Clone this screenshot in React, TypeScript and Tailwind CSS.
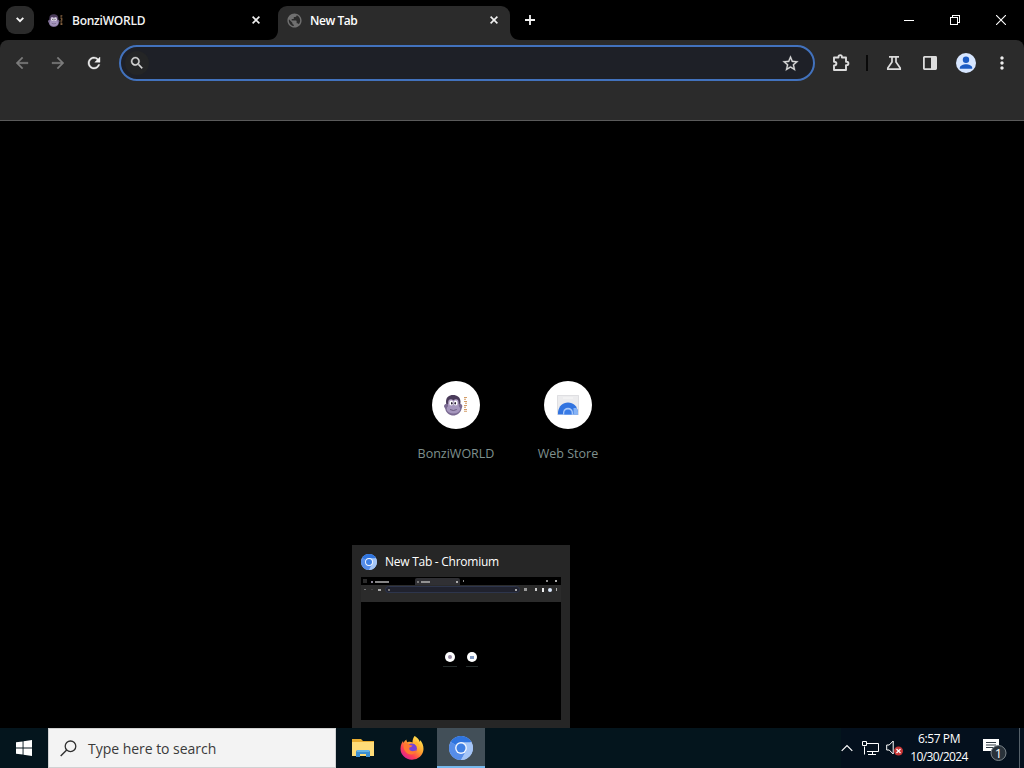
import React from "react";
import { MdPublic, MdMoreVert } from "react-icons/md";

function Cross({ className = "" }: { className?: string }) {
  return (
    <svg className={className} width="8" height="8" viewBox="0 0 8 8">
      <path d="M.6.6 7.4 7.4M7.4.6.6 7.4" stroke="#f0f0f0" strokeWidth="1.6" />
    </svg>
  );
}

function Glyph({ d, size, color, weight = 0.5 }: { d: string; size: number; color: string; weight?: number }) {
  return (
    <svg width={size} height={size} viewBox="0 0 24 24">
      <path d={d} fill={color} stroke={color} strokeWidth={weight} />
    </svg>
  );
}

const backPath = "M20 11H7.830l5.590-5.590L12 4l-8 8 8 8 1.410-1.410L7.830 13H20v-2z";
const forwardPath = "M12 4l-1.410 1.410L16.170 11H4v2h12.170l-5.580 5.590L12 20l8-8z";
const refreshPath =
  "M17.650 6.350A7.958 7.958 0 0 0 12 4c-4.420 0-7.990 3.580-7.990 8s3.570 8 7.990 8c3.730 0 6.840-2.550 7.730-6h-2.080A5.990 5.990 0 0 1 12 18c-3.310 0-6-2.690-6-6s2.690-6 6-6c1.660 0 3.140.690 4.220 1.780L13 11h7V4l-2.350 2.350z";
const searchPath =
  "M15.500 14h-.790l-.280-.270A6.471 6.471 0 0 0 16 9.500 6.500 6.500 0 1 0 9.500 16c1.610 0 3.090-.590 4.230-1.570l.270.280v.790l5 4.990L20.490 19l-4.990-5zm-6 0C7.010 14 5 11.990 5 9.500S7.010 5 9.500 5 14 7.010 14 9.500 11.990 14 9.500 14z";
const starPath =
  "M22 9.240l-7.190-.620L12 2 9.190 8.630 2 9.240l5.460 4.730L5.820 21 12 17.270 18.180 21l-1.630-7.030L22 9.240zM12 15.400l-3.760 2.270 1-4.280-3.320-2.880 4.380-.380L12 6.100l1.710 4.040 4.380.380-3.320 2.880 1 4.280L12 15.400z";

function Bonzi({ size }: { size: number }) {
  return (
    <svg width={size} height={size} viewBox="0 0 24 24">
      <path d="M2 9C2 4 5 2 9 2s7.500 2 7.500 7l-.5 5H2.500z" fill="#4a3b5a" />
      <path d="M0 13.500C0 11.500 2 10.500 3.500 11h11.500c1.500-.5 3.500.5 3.300 2.500L17.500 16C16.500 20 13 22.500 9.300 22.500S2 20 1.300 16z" fill="#7a6a92" />
      <path d="M4.200 9.500C4 6 7.500 5.500 9.400 7.500c2-2 5.400-1.500 5.200 2V14H4.200z" fill="#b6a5c9" />
      <ellipse cx="9.400" cy="16" rx="6.800" ry="4.600" fill="#a596bd" />
      <ellipse cx="7.300" cy="10" rx="1.900" ry="2.500" fill="#fff" />
      <ellipse cx="11.600" cy="10" rx="1.900" ry="2.500" fill="#fff" />
      <ellipse cx="7.800" cy="10.200" rx=".8" ry="1.300" fill="#20162c" />
      <ellipse cx="11.200" cy="10.200" rx=".8" ry="1.300" fill="#20162c" />
      <path d="M6 16.500q3.400 2 6.800 0" stroke="#6b5b80" fill="none" />
      <path d="M20 4.500h3M20 6.300h2M20 8.500h3M21 10.300h2M20 12.500h3M20 14.300h2M20 16.500h3M20 18.300h3" stroke="#d39c66" strokeWidth="1.100" />
    </svg>
  );
}

function Chromium({ size }: { size: number }) {
  return (
    <svg width={size} height={size} viewBox="0 0 24 24">
      <circle cx="12" cy="12" r="12" fill="#a4c5f7" />
      <path d="M12 12 1.600 6A12 12 0 0 1 22.400 6z" fill="#2f74de" />
      <path d="M12 12 1.600 6A12 12 0 0 0 12 24l5.200-9z" fill="#568de8" />
      <path d="M12 6.200h10.500A12 12 0 0 1 12 24l5-9z" fill="#a4c5f7" />
      <circle cx="12" cy="12" r="5.900" fill="#f3f7ff" />
      <circle cx="12" cy="12" r="4.500" fill="#3f80e4" />
    </svg>
  );
}

function WebStore() {
  return (
    <svg width="22" height="20" viewBox="0 0 22 20">
      <path d="M0 0h22v20H0z" fill="#ececee" />
      <path d="M.5 20V.5h21V20" fill="none" stroke="#dfdfe2" />
      <path d="M6 2.500h10v1H6z" fill="#f8f8f8" />
      <path d="M1 19.500V17C2 11 5.500 7.500 11 7.500S20 11 21 17v2.500z" fill="#3274e0" />
      <path d="M16.500 13h3c1 1.500 1.300 2.500 1.500 4v2.500h-4.500z" fill="#86b3f5" />
      <path d="M6 19.500v-1.700a5 5 0 0 1 10 0v1.700z" fill="#a9c9fa" />
      <path d="M7.300 19.500v-1.300a3.700 3.700 0 0 1 7.400 0v1.300z" fill="#397ce7" />
    </svg>
  );
}

function TabStrip() {
  return (
    <div className="flex h-10 items-end bg-black">
      <div className="mb-1.5 ml-1.5 flex h-7 w-7 items-center justify-center rounded-[9px] bg-[#2b2b2b]">
        <svg width="8" height="6" viewBox="0 0 8 6"><path d="m.7.8 3.300 3.300L7.300.8" stroke="#f4f4f4" strokeWidth="1.900" fill="none" /></svg>
      </div>
      <div className="flex h-10 w-[234px] items-center pl-3.5">
        <Bonzi size={15} />
        <span className="ml-[9px] flex-1 pt-0.5 text-[12px] font-semibold tracking-[-0.25px] text-[#f2f2f2]">BonziWORLD</span>
        <Cross className="mr-2" />
      </div>
      <svg width="10" height="10" viewBox="0 0 10 10"><path d="M10 0v10H0C6 10 10 6 10 0z" fill="#2b2b2b" /></svg>
      <div className="flex h-[34px] w-[232px] items-center rounded-t-[9px] bg-[#2b2b2b] pb-1.5 pl-2">
        <MdPublic size={17} color="#707070" />
        <span className="ml-[7px] flex-1 pt-0.5 text-[12px] font-semibold tracking-[-0.45px] text-white">New Tab</span>
        <Cross className="mr-3" />
      </div>
      <svg width="10" height="10" viewBox="0 0 10 10"><path d="M0 0v10h10C4 10 0 6 0 0z" fill="#2b2b2b" /></svg>
      <svg className="mb-[15px] ml-[5px]" width="10" height="10" viewBox="0 0 10 10"><path d="M5 0v10M0 5h10" stroke="#f3f3f3" strokeWidth="1.800" /></svg>
      <div className="ml-auto flex h-10 items-center">
        <div className="flex w-[46px] justify-center"><div className="h-px w-[10px] bg-white" /></div>
        <div className="flex w-[46px] justify-center">
          <svg width="10" height="10" viewBox="0 0 10 10" shapeRendering="crispEdges"><path d="M.5 2.500h7v7h-7zM2.500 2.500v-2h7v7h-2" stroke="#fff" fill="none" /></svg>
        </div>
        <div className="flex w-[46px] justify-center">
          <svg width="10" height="10" viewBox="0 0 10 10"><path d="m0 0 10 10m0-10-10 10" stroke="#fff" strokeWidth="1.100" /></svg>
        </div>
      </div>
    </div>
  );
}

function Toolbar() {
  return (
    <div className="h-[81px] rounded-t-lg border-b border-[#5a5a5a] bg-[#2b2b2b] pt-[5px]">
      <div className="flex h-9 items-center">
        <div className="flex w-[119px] items-center gap-[18px] pl-[13px]">
          <Glyph d={backPath} size={18} color="#7c7c7c" />
          <Glyph d={forwardPath} size={18} color="#7c7c7c" />
          <Glyph d={refreshPath} size={18} color="#f0f0f0" />
        </div>
        <div className="flex h-9 w-[696px] items-center justify-between rounded-full border-2 border-[#4272bd] bg-[#1e2027] pr-[13px] pl-1">
          <div className="flex h-6 w-6 items-center justify-center rounded-full bg-[#242526]">
            <Glyph d={searchPath} size={16} color="#d5d5d5" />
          </div>
          <Glyph d={starPath} size={19} color="#d8d8d8" weight={0.3} />
        </div>
        <svg className="ml-[17px]" width="18" height="18" viewBox="0 0 18 18">
          <path d="M2 3.500h4.500v-.700a1.700 1.700 0 0 1 3.400 0v.700H14v4.200h.7a1.700 1.700 0 0 1 0 3.400H14v4.900H2v-4.500c1.700 0 2.400-.8 2.400-2S3.700 7.700 2 7.700z" fill="none" stroke="#dcdcdc" strokeWidth="1.900" strokeLinejoin="round" />
        </svg>
        <div className="ml-4 h-4 w-[2px] bg-[#090909]" />
        <svg className="ml-[18px]" width="16" height="14" viewBox="0 0 16 14">
          <path d="M3 .9h10M6 .9v5L1.800 12v1.100h12.400V12L10 5.900v-5" fill="none" stroke="#dcdcdc" strokeWidth="1.700" />
        </svg>
        <svg className="ml-[21px]" width="14" height="14" viewBox="0 0 14 14">
          <rect x=".9" y=".9" width="12.200" height="12.200" rx=".5" fill="none" stroke="#dcdcdc" strokeWidth="1.800" />
          <path d="M8 1h5v12H8z" fill="#dcdcdc" />
        </svg>
        <svg className="ml-[19px]" width="20" height="20" viewBox="0 0 20 20">
          <circle cx="10" cy="10" r="10" fill="#d7e6ff" />
          <circle cx="10" cy="6.700" r="3.200" fill="#1b5bc4" />
          <path d="M3.800 15.800v-1c0-2.400 3.600-3.600 6.200-3.600s6.200 1.200 6.200 3.600v1z" fill="#1b5bc4" />
        </svg>
        <MdMoreVert className="ml-4" size={20} color="#eee" />
      </div>
    </div>
  );
}

function Shortcut({ label, children }: { label: string; children: React.ReactNode }) {
  return (
    <div className="flex w-28 flex-col items-center">
      <div className="flex h-12 w-12 items-center justify-center rounded-full bg-white">{children}</div>
      <span className="mt-4 text-[12.5px] leading-[18px] text-[#7f908e]">{label}</span>
    </div>
  );
}

function MiniWindow() {
  return (
    <div className="h-[143px] w-[200px] bg-black">
      <div className="flex h-2 items-end">
        <div className="mb-[2px] ml-[2px] h-[4px] w-[4px] bg-[#2b2b2b]" />
        <div className="mb-[2px] ml-1 h-[2px] w-[2px] bg-[#8d8798]" />
        <div className="mb-[2px] ml-[2px] h-[2px] w-[14px] bg-[#858585]" />
        <div className="ml-[26px] flex h-[7px] w-[45px] items-center rounded-t-[2px] bg-[#303034]">
          <div className="ml-[2px] h-[2px] w-[2px] bg-[#777]" />
          <div className="ml-[2px] h-[2px] w-[9px] bg-[#929292]" />
          <div className="mr-[2px] ml-auto h-[2px] w-[2px] bg-[#aaa]" />
        </div>
        <div className="mb-[3px] ml-[3px] h-[2px] w-[1px] bg-[#888]" />
        <div className="mr-[4px] mb-[3px] ml-auto flex gap-[7px]"><div className="h-[2px] w-[2px] bg-[#888]" /><div className="h-[2px] w-[2px] bg-[#aaa]" /></div>
      </div>
      <div className="h-[17px] bg-[#2b2b2b] pt-[1px]">
        <div className="flex h-[7px] items-center">
          <div className="ml-[3px] h-px w-[2px] bg-[#777]" />
          <div className="ml-[5px] h-px w-[2px] bg-[#444]" />
          <div className="ml-[5px] h-[2px] w-[3px] bg-[#aaa]" />
          <div className="ml-[4px] flex h-[7px] w-[135px] items-center justify-between rounded-full border border-[#2d354c] bg-[#20222e] px-[2px]">
            <div className="h-[2px] w-[2px] bg-[#777]" />
            <div className="h-[2px] w-[2px] bg-[#aaa]" />
          </div>
          <div className="ml-1 h-[3px] w-[3px] bg-[#999]" />
          <div className="ml-2 h-[3px] w-[2px] bg-[#ccc]" />
          <div className="ml-[5px] h-[4px] w-[2px] bg-[#eee]" />
          <div className="ml-[4px] h-[4px] w-[4px] rounded-full bg-[#dce8fb]" />
          <div className="ml-[4px] h-[3px] w-px bg-[#aaa]" />
        </div>
      </div>
      <div className="flex gap-3 pt-[50px] pl-[84px]">
        <div className="flex w-[10px] flex-col items-center">
          <div className="flex h-[10px] w-[10px] items-center justify-center rounded-full bg-white"><div className="h-[4px] w-[4px] rounded-full bg-[#998ba5]" /></div>
          <div className="mt-[4px] h-px w-[14px] bg-[#242b2a]" />
        </div>
        <div className="flex w-[10px] flex-col items-center">
          <div className="flex h-[10px] w-[10px] items-center justify-center rounded-full bg-white"><div className="h-[3px] w-[4px] bg-[#819ac3]" /></div>
          <div className="mt-[4px] h-px w-[12px] bg-[#242b2a]" />
        </div>
      </div>
    </div>
  );
}

function Explorer() {
  return (
    <svg width="22" height="18" viewBox="0 0 22 18">
      <path d="M0 0h9l2 2h11v15H0z" fill="#e9ad31" />
      <path d="M0 3h22v14H0z" fill="#ffdc78" />
      <path d="M4 18v-5q0-2 2-2h10q2 0 2 2v5h-4v-3H8v3z" fill="#3d8fd1" />
      <path d="M5 11h12v2H5z" fill="#65b3e7" />
    </svg>
  );
}

function Firefox() {
  return (
    <svg width="24" height="24" viewBox="0 0 24 24">
      <defs>
        <linearGradient id="flame" x1=".85" y1=".1" x2=".2" y2=".9">
          <stop stopColor="#ffe34d" /><stop offset=".45" stopColor="#ff9a2e" /><stop offset=".75" stopColor="#ff4150" /><stop offset="1" stopColor="#e2258c" />
        </linearGradient>
      </defs>
      <path d="M14.500 0c4 2.300 5 4.700 5.200 6 .4-.6.3-1.500.2-2 2.300 2.300 3.700 5.400 3.600 9A11.500 11 0 0 1 .5 12.500c0-3.600 1.500-6 2.500-7.500l.4 2c.8-1.300 1.800-2.700 3-3.500 0 1.200.4 2 1.100 2.700 2-.8 3.500-.4 5 .2 0-2.400.7-4.400 2-6.400z" fill="url(#flame)" />
      <circle cx="12" cy="12.500" r="4.900" fill="#7542d7" />
      <path d="M4 7.500c2-.8 4-.3 5.500 1.500l3 .5c-.4 1.400-2.200 1.600-3 2.100-.8 1.800.6 3.700 3 3.700 2 0 3-1 4-1-1 4.500-7 5.700-10.500 2C3.500 13.600 3 10.500 4 7.500z" fill="#ff7831" />
      <path d="M12.500 7.300c3.300.3 5.100 2.700 5.100 5.600l1.600-4.300-2.700-3z" fill="#ffb52d" />
    </svg>
  );
}

function Taskbar() {
  return (
    <div className="flex h-10 bg-[#04151d]">
      <div className="flex w-12 items-center justify-center">
        <svg width="16" height="16" viewBox="0 0 16 16"><path d="m0 2.300 6.600-.9v6.100H0zM7.500 1.200 16 0v7.500H7.500zM0 8.400h6.600v6.200L0 13.700zM7.500 8.400H16V16l-8.500-1.200z" fill="#fff" /></svg>
      </div>
      <div className="flex w-72 items-center border border-[#d0d1d2] bg-[#f3f3f3] pl-[11px]">
        <svg width="17" height="17" viewBox="0 0 17 17"><circle cx="10.500" cy="6.300" r="5.300" fill="none" stroke="#303030" strokeWidth="1.300" /><path d="M6.700 10.100.7 16.100" stroke="#303030" strokeWidth="1.400" /></svg>
        <span className="ml-[11px] text-[14px] tracking-[-0.03px] text-[#3a3a3a]">Type here to search</span>
      </div>
      <div className="ml-[3px] flex">
        <div className="flex w-12 items-center justify-center"><Explorer /></div>
        <div className="ml-px flex w-12 items-center justify-center"><Firefox /></div>
        <div className="ml-px flex w-12 items-center justify-center border-b-2 border-[#76b9ed] bg-[#424f58] pt-[2px]"><Chromium size={24} /></div>
      </div>
      <div className="ml-auto flex items-center bg-[#04101d]">
        <svg width="12" height="8" viewBox="0 0 12 8"><path d="m.7 6.800 5.300-5.300 5.300 5.300" fill="none" stroke="#fff" strokeWidth="1.200" /></svg>
        <svg className="ml-[9px]" width="17" height="15" viewBox="0 0 17 15"><path d="M5 2.500h11.500v8H5M2.500 5.500v8M10.500 10.500v3M6 13.500h8M.5.500h4v4h-4z" fill="none" stroke="#fff" /></svg>
        <svg className="ml-[7px]" width="18" height="18" viewBox="0 0 18 18">
          <path d="M.7 6h2.500l4-4v13l-4-4H.7z" fill="none" stroke="#fff" />
          <circle cx="12.500" cy="12" r="4.500" fill="#c93636" />
          <path d="m10.500 10 4 4m0-4-4 4" stroke="#fff" strokeWidth="1.200" />
        </svg>
        <div className="ml-[3px] flex w-[64px] flex-col items-center text-[12px] leading-[18px] whitespace-nowrap text-white">
          <span className="tracking-[-0.4px]">6:57 PM</span>
          <span className="tracking-[-0.6px]">10/30/2024</span>
        </div>
        <svg className="ml-[12px]" width="26" height="26" viewBox="0 0 26 26">
          <path d="M0 4h16v12h-4.500v3l-3-3H0z" fill="#fff" />
          <path d="M3 7.500h10M3 10h10M3 12.500h10" stroke="#1a2630" strokeWidth=".9" />
          <circle cx="15.500" cy="18" r="7.500" fill="#29323a" stroke="#7c858b" />
          <text x="15.500" y="22.800" textAnchor="middle" fontSize="13" fontWeight="500" fill="#fff">1</text>
        </svg>
        <div className="ml-[10px] h-10 w-px bg-[#56616a]" />
        <div className="w-1" />
      </div>
    </div>
  );
}

export default function App() {
  return (
    <div className="relative flex h-[768px] w-[1024px] flex-col overflow-hidden bg-black font-['Open_Sans','Noto_Sans',sans-serif] select-none">
      <TabStrip />
      <Toolbar />
      <main className="flex flex-1 items-start justify-center pt-[260px]">
        <Shortcut label="BonziWORLD"><Bonzi size={24} /></Shortcut>
        <Shortcut label="Web Store"><WebStore /></Shortcut>
      </main>
      <Taskbar />
      <section className="absolute top-[545px] left-[352px] h-[183px] w-[218px] bg-[#262626] px-[9px]">
        <div className="flex h-8 items-center pt-[2px]">
          <Chromium size={16} />
          <span className="ml-2 text-[12px] tracking-[-0.26px] text-white">New Tab - Chromium</span>
        </div>
        <MiniWindow />
      </section>
    </div>
  );
}
